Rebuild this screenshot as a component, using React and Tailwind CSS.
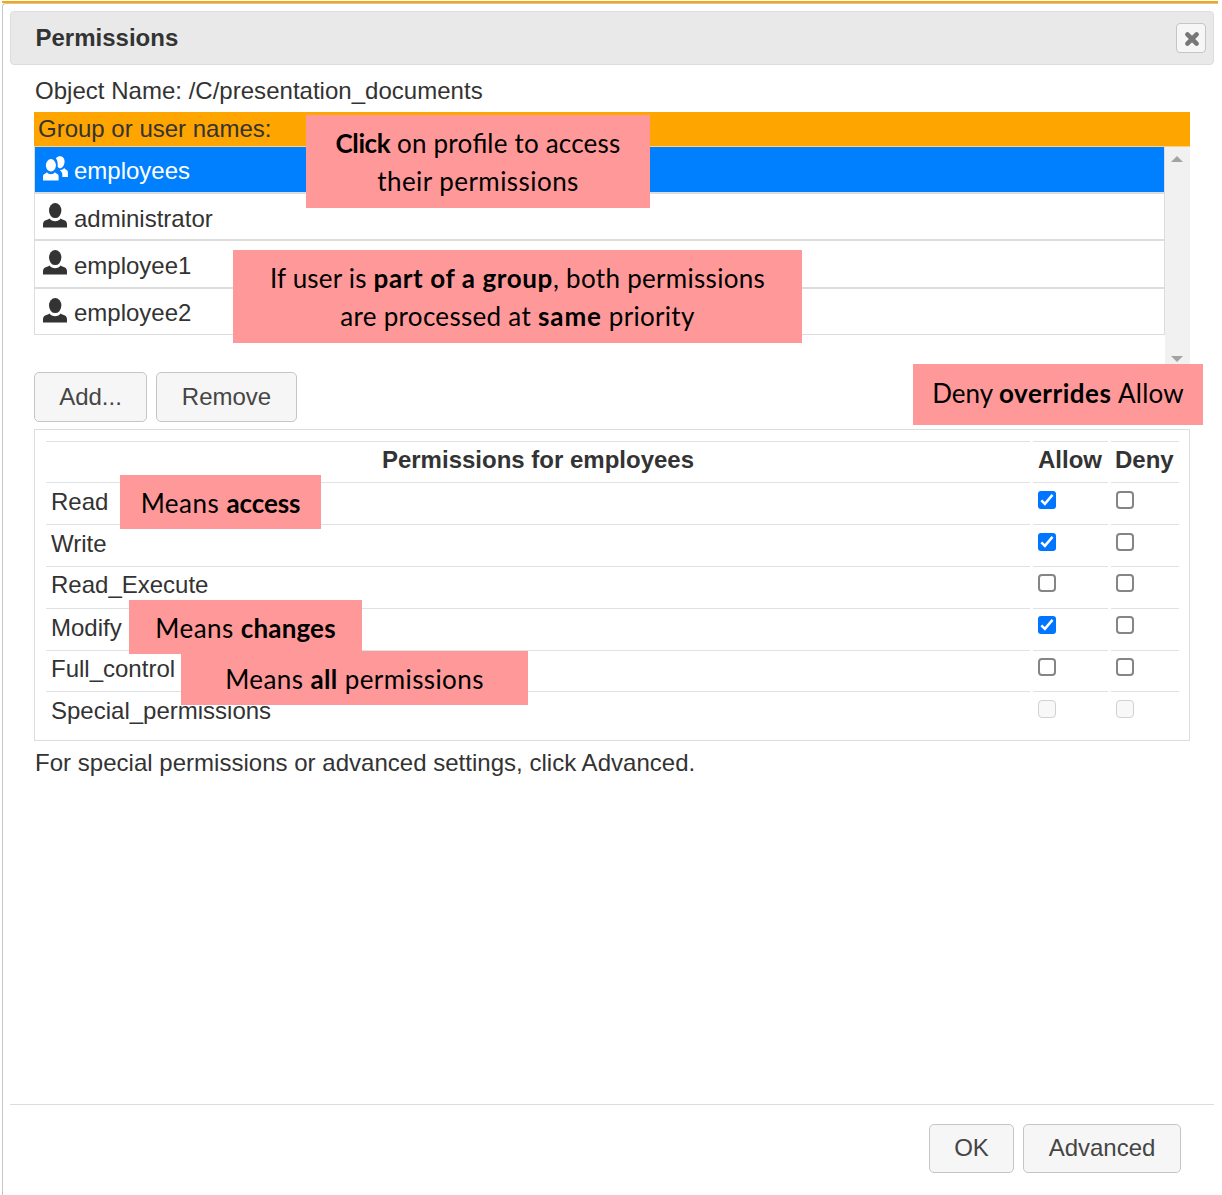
import React from "react";

const users = [
  { name: "employees", group: true, row: "h-[47px] border-b-2", icon: "mt-[9px]", label: "mt-[10px]" },
  { name: "administrator", row: "h-[47px] border-b-2", icon: "mt-[9px]", label: "mt-[11px]" },
  { name: "employee1", row: "h-[48px] border-b-2", icon: "mt-[9px]", label: "mt-[11px]" },
  { name: "employee2", row: "h-[46px] border-b", icon: "mt-[9px]", label: "mt-[10px]" },
];

const permissions = [
  { name: "Read", allow: true, h: "h-[42px]", label: "pt-[5px]", box: "pt-[8px]" },
  { name: "Write", allow: true, h: "h-[42px]", label: "pt-[5px]", box: "pt-[8px]" },
  { name: "Read_Execute", h: "h-[42px]", label: "pt-[4px]", box: "pt-[7px]" },
  { name: "Modify", allow: true, h: "h-[42px]", label: "pt-[5px]", box: "pt-[7px]" },
  { name: "Full_control", h: "h-[41px]", label: "pt-[4px]", box: "pt-[7px]" },
  { name: "Special_permissions", disabled: true, h: "h-[39px]", label: "pt-[5px]", box: "pt-[8px]" },
];

function UserIcon() {
  return (
    <svg className="block h-[25px] w-[24px]" viewBox="0 0 24 25" fill="#333">
      <ellipse cx="12.200" cy="7.600" rx="6.200" ry="7.500" />
      <path d="M0 24.600v-3.200c0-2.200 1-3.600 2.800-4.200 1.700-.5 2.700-.9 3.700-1.700 1.300 1.700 3.200 2.700 5.600 2.700s4.300-1 5.500-2.700c1 .8 2.100 1.200 3.700 1.700 1.800.6 2.700 2 2.700 4.200v3.200z" />
    </svg>
  );
}

function GroupIcon() {
  return (
    <svg className="block h-[25px] w-[25px]" viewBox="0 0 25 25" fill="#fff">
      <path d="M12.900 2.300C13.900.8 15.400.2 17 .2c2.800 0 4.600 2.200 4.600 5.400 0 3.200-1.600 6-3.800 6.600-1.100.2-2.200-.4-3.200-1.500.4-3.300-.1-6.300-1.700-8.400z" />
      <path d="M16.800 14.300c1.800-.1 3.400-.9 4.400-2.200.5.700 1.200 1.100 2 1.600 1.200.6 1.700 1.400 1.700 2.800v4.500h-5.600v-2.400c0-1.800-.9-3.200-2.500-4.300z" />
      <ellipse cx="7.900" cy="9.300" rx="5" ry="6.200" />
      <path d="M0 24.600v-4c0-1.500.6-2.300 1.800-2.900 1-.5 1.500-.8 2-1.500 1.100 1.300 2.400 2 4.100 2s3-.7 4.100-2c.5.700 1 1 2 1.500 1.200.6 1.600 1.400 1.600 2.900v4z" />
    </svg>
  );
}

function Check({ on, disabled }) {
  if (on) {
    return (
      <div className="h-[18px] w-[18px] rounded-[3px] bg-[#0075ff]">
        <svg className="block" width="18" height="18" viewBox="0 0 18 18" fill="none" stroke="#fff" strokeWidth="2.500">
          <path d="M3.300 9.300L6.900 12.900 14.500 3.900" />
        </svg>
      </div>
    );
  }
  return disabled ? (
    <div className="h-[18px] w-[18px] rounded-[4px] border-[1.500px] border-[#d1d1d1] bg-[#f8f8f8]" />
  ) : (
    <div className="h-[18px] w-[18px] rounded-[4px] border-2 border-[#858585] bg-white" />
  );
}

function Button({ className, children }) {
  return (
    <button className={"flex items-center justify-center rounded-[5px] border border-[#c5c5c5] bg-[#f6f6f6] text-[#454545] " + className}>
      {children}
    </button>
  );
}

function Note({ className, children }) {
  return (
    <div className={"absolute bg-[#ff9999] text-center font-['Lato'] text-[26px] leading-[38px] whitespace-nowrap text-black " + className}>
      {children}
    </div>
  );
}

export default function App() {
  return (
    <div className="relative h-[1195px] w-[1222px] overflow-hidden bg-white pt-[1px] pl-[2px] font-['Liberation_Sans',Arial,sans-serif] text-[24px] leading-[28px] text-[#333]">
      <div className="h-[2px] w-[1216px] bg-[#ffa500]" />
      <div className="flex h-[1192px] w-[1216px] flex-col rounded-tl-[4px] border-t border-l border-[#c5c5c5] pt-[7px] pl-[7px]">
        <header className="flex h-[54px] w-[1204px] shrink-0 items-center justify-between rounded-[4px] border border-[#dddddd] bg-[#e9e9e9] pr-[7px] pl-[24.500px]">
          <h1 className="font-bold">Permissions</h1>
          <button className="flex h-[30px] w-[30px] items-center justify-center rounded-[4px] border border-[#c5c5c5] bg-[#f6f6f6] pt-[1px] pl-[1px]">
            <svg width="16" height="16" viewBox="0 0 16 16" stroke="#777" strokeWidth="4.600" strokeLinecap="round">
              <path d="M3.400 3.400L12.600 12.600M12.600 3.400L3.400 12.600" />
            </svg>
          </button>
        </header>

        <main className="ml-[24px] flex w-[1156px] flex-col">
          <p className="mt-[12px] h-[35px] pl-[1px] tracking-[0.020px]">Object Name: /C/presentation_documents</p>
          <div className="h-[35px] border-b border-[#ffd080] bg-[#ffa500] pt-[3px] pl-[4px]">Group or user names:</div>
          <div className="flex h-[217px] justify-between">
            <div className="flex w-[1131px] flex-col">
              {users.map((u) => (
                <div
                  key={u.name}
                  className={
                    "flex border-l border-r border-[#ddd] pl-[8px] " +
                    u.row +
                    (u.group ? " bg-[#007fff] text-white" : " bg-white")
                  }
                >
                  <div className={"w-[31px] " + u.icon}>{u.group ? <GroupIcon /> : <UserIcon />}</div>
                  <div className={u.label}>{u.name}</div>
                </div>
              ))}
            </div>
            <div className="flex w-[25px] flex-col items-center justify-between bg-[#f1f1f1] pt-[9px] pr-[1px] pb-[2px]">
              <div className="h-0 w-0 border-x-[6px] border-b-[6px] border-x-transparent border-b-[#a3a3a3]" />
              <div className="h-0 w-0 border-x-[6px] border-t-[6px] border-x-transparent border-t-[#a3a3a3]" />
            </div>
          </div>
          <div className="mt-[8px] flex gap-[9px]">
            <Button className="h-[50px] w-[113px]">Add...</Button>
            <Button className="h-[50px] w-[141px]">Remove</Button>
          </div>

          <section className="mt-[7px] h-[312px] border border-[#ddd] pt-[11px] pl-[11px]">
            <div className="grid h-[41px] w-[1133px] grid-cols-[984px_75px_68px] gap-x-[3px] font-bold">
              <div className="border-t border-[#dee2e6] pt-[4px] text-center">Permissions for employees</div>
              <div className="border-t border-[#dee2e6] pt-[4px] pl-[5px]">Allow</div>
              <div className="border-t border-[#dee2e6] pt-[4px] pl-[4px]">Deny</div>
            </div>
            {permissions.map((p) => (
              <div key={p.name} className={"grid w-[1133px] grid-cols-[984px_75px_68px] gap-x-[3px] " + p.h}>
                <div className={"border-t border-[#dee2e6] pl-[5px] " + p.label}>{p.name}</div>
                <div className={"border-t border-[#dee2e6] pl-[5px] " + p.box}><Check on={p.allow} disabled={p.disabled} /></div>
                <div className={"border-t border-[#dee2e6] pl-[5px] " + p.box}><Check disabled={p.disabled} /></div>
              </div>
            ))}
          </section>
          <p className="mt-[8px] pl-[1px] tracking-[0.020px]">For special permissions or advanced settings, click Advanced.</p>
        </main>

        <footer className="mt-auto flex h-[91px] w-[1204px] justify-end gap-[9px] border-t border-[#ddd] pt-[19px] pr-[33px]">
          <Button className="h-[49px] w-[85px] pb-[2px]">OK</Button>
          <Button className="h-[49px] w-[158px] pb-[2px]">Advanced</Button>
        </footer>
      </div>

      <Note className="top-[115px] left-[306px] h-[93px] w-[344px] pt-[9px]">
        <div className="tracking-[0.200px]"><b className="tracking-[-0.400px]">Click</b> on pro<span className="tracking-normal">fi</span>le to access</div>
        <div className="tracking-[0.450px]">their permissions</div>
      </Note>
      <Note className="top-[250px] left-[233px] h-[93px] w-[569px] pt-[9px]">
        <div className="tracking-[0.300px]">
          <span className="tracking-[0.200px]">If user is</span> <b className="tracking-[0.600px]">part of a group</b>, both permissions
        </div>
        <div className="tracking-[0.300px]">are processed at <b className="tracking-[0.900px]">same</b> priority</div>
      </Note>
      <Note className="top-[364px] left-[913px] h-[61px] w-[290px] pt-[10px]">
        Deny <b className="tracking-[0.500px]">overrides</b> <span className="tracking-[0.200px]">Allow</span>
      </Note>
      <Note className="top-[475px] left-[120px] h-[54px] w-[201px] pt-[9px] tracking-[0.500px]">
        Means <b className="tracking-[-0.100px]">access</b>
      </Note>
      <Note className="top-[600px] left-[129px] h-[54px] w-[233px] pt-[9px] tracking-[0.450px]">
        Means <b className="tracking-[0.150px]">changes</b>
      </Note>
      <Note className="top-[651px] left-[181px] h-[54px] w-[347px] pt-[9px] tracking-[0.400px]">
        Means <b>all</b> permissions
      </Note>
    </div>
  );
}
